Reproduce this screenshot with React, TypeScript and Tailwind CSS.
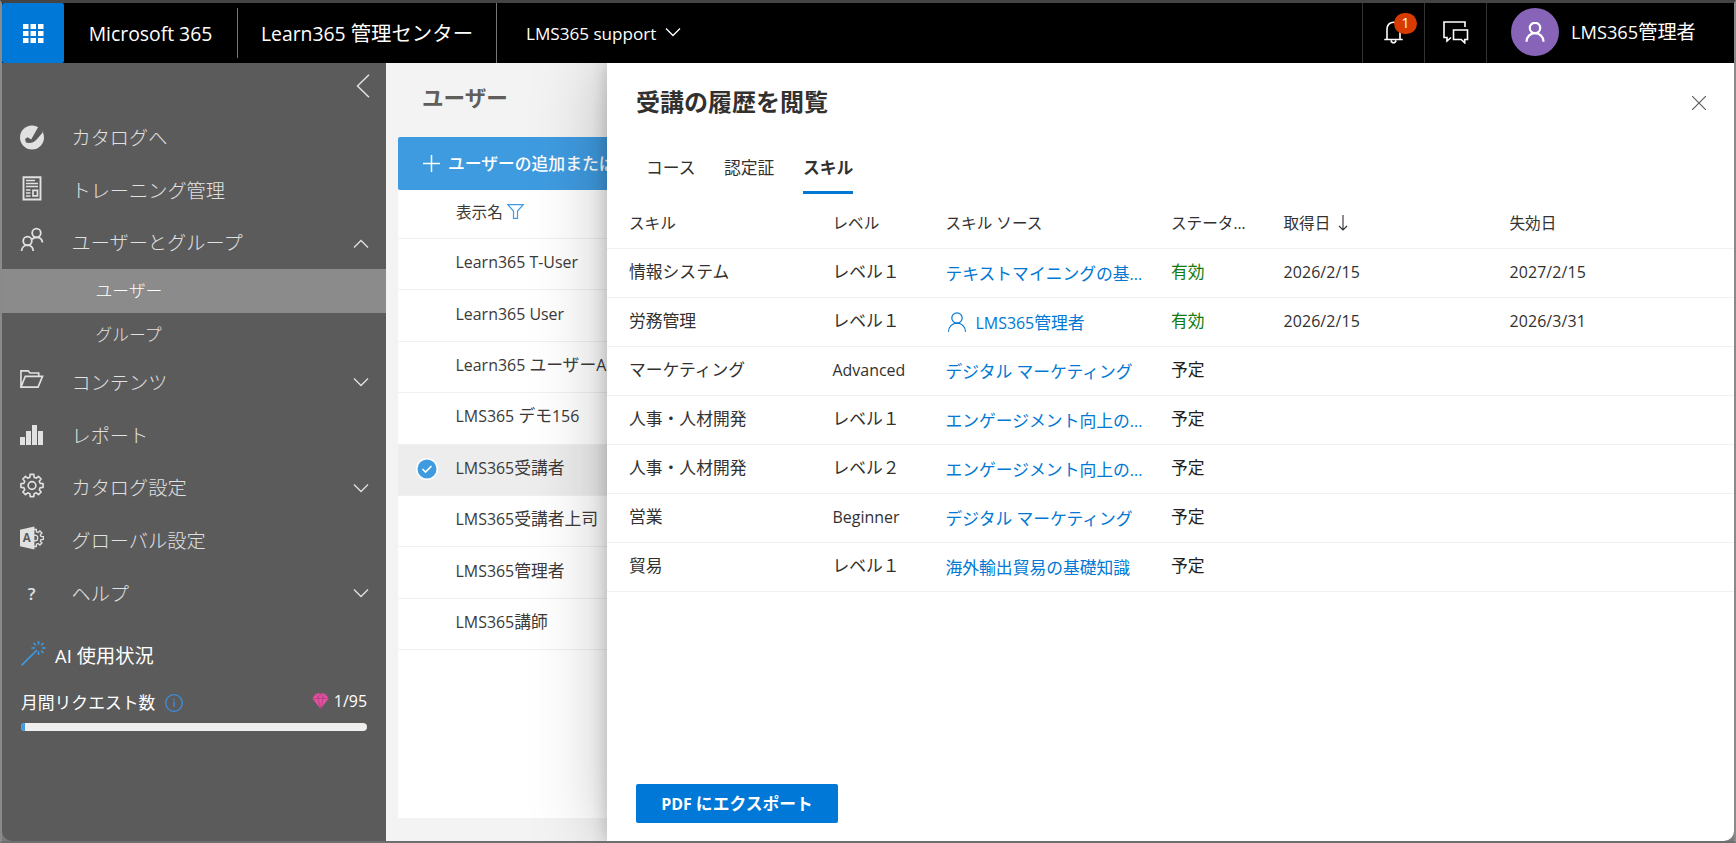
import type { ReactNode } from "react";
import clsx from "clsx";

interface NavItem {
  label: string;
  icon: ReactNode;
  chevron?: "up" | "down";
  children?: { label: string; active?: boolean }[];
}

interface Skill {
  name: string;
  level: string;
  source: string;
  person?: boolean;
  active?: boolean;
  acquired?: string;
  expires?: string;
}

const users = [
  "Learn365 T-User",
  "Learn365 User",
  "Learn365 ユーザーA",
  "LMS365 デモ156",
  "LMS365受講者",
  "LMS365受講者上司",
  "LMS365管理者",
  "LMS365講師",
];
const selectedUser = "LMS365受講者";

const skills: Skill[] = [
  { name: "情報システム", level: "レベル１", source: "テキストマイニングの基...", active: true, acquired: "2026/2/15", expires: "2027/2/15" },
  { name: "労務管理", level: "レベル１", source: "LMS365管理者", person: true, active: true, acquired: "2026/2/15", expires: "2026/3/31" },
  { name: "マーケティング", level: "Advanced", source: "デジタル マーケティング" },
  { name: "人事・人材開発", level: "レベル１", source: "エンゲージメント向上の..." },
  { name: "人事・人材開発", level: "レベル２", source: "エンゲージメント向上の..." },
  { name: "営業", level: "Beginner", source: "デジタル マーケティング" },
  { name: "貿易", level: "レベル１", source: "海外輸出貿易の基礎知識" },
];

// Latin runs are set slightly smaller than the Japanese text around them
function Txt({ children }: { children: string }) {
  return (
    <>
      {children.split(/([\x20-\x7e]+)/).map((part, i) =>
        i % 2 ? (
          <span key={i} className="text-[0.95em] whitespace-pre">
            {part}
          </span>
        ) : (
          part
        )
      )}
    </>
  );
}

function Chevron({ dir, className }: { dir: "up" | "down"; className?: string }) {
  return (
    <svg width="16" height="10" viewBox="0 0 16 10" fill="none" stroke="currentColor" strokeWidth="1.3" className={className}>
      <path d={dir === "up" ? "M1 8.5 8 1.5l7 7" : "M1 1.5l7 7 7-7"} />
    </svg>
  );
}

function Person({ size, stroke }: { size: number; stroke: number }) {
  return (
    <svg width={size} height={size} viewBox="0 0 20 20" fill="none" stroke="currentColor" strokeWidth={stroke}>
      <circle cx="10" cy="6" r="5.2" />
      <path d="M1.5 19.7c0-4.8 3.7-8.5 8.5-8.5s8.5 3.7 8.5 8.5" />
    </svg>
  );
}

function gearPath(cx: number, cy: number, outer: number, inner: number) {
  const pts: string[] = [];
  for (let i = 0; i < 8; i++) {
    const a = (i * Math.PI) / 4;
    [
      [inner, -0.25],
      [outer, -0.17],
      [outer, 0.17],
      [inner, 0.25],
    ].forEach(([r, d]) => {
      pts.push(`${(cx + r * Math.sin(a + d)).toFixed(2)} ${(cy - r * Math.cos(a + d)).toFixed(2)}`);
    });
  }
  return `M${pts.join("L")}Z`;
}

const navItems: NavItem[] = [
  {
    label: "カタログへ",
    icon: (
      <svg width="24" height="25" viewBox="0 0 24 25">
        <circle cx="12" cy="12.5" r="12" fill="currentColor" />
        <path d="M19.3 0 11.2 14.6 7.6 12.2 5 14l1 3.600c2.600.8 5.300.5 7.600-.7 2.600-1.600 5.400-5.200 9.200-9.700z" fill="#5b5b5b" />
      </svg>
    ),
  },
  {
    label: "トレーニング管理",
    icon: (
      <svg width="20" height="25" viewBox="0 0 20 25" fill="none" stroke="currentColor" className="-mt-1">
        <path d="M1.5 1.2h17v22.3h-17z" strokeWidth="1.9" />
        <path d="M4 4.5h9M4 7.5h12M4 10.5h12M4 14h4.5M4 17h4.5M4 20h4.5" strokeWidth="1.7" />
        <path d="M11 14.3h4.5v5.5H11z" strokeWidth="1.7" />
      </svg>
    ),
  },
  {
    label: "ユーザーとグループ",
    chevron: "up",
    icon: (
      <svg width="24" height="25" viewBox="0 0 24 25" fill="none" stroke="currentColor" strokeWidth="1.8" className="-mt-1.5">
        <circle cx="16.5" cy="6" r="4.3" />
        <circle cx="7.5" cy="14" r="4.3" />
        <path d="M1.5 24c.3-3.4 2.7-5.8 6-5.8s5.4 2.4 5.8 5.8M12 12.4c1-1.300 2.700-2.100 4.500-2.100 3.200 0 5.600 2 6 5.200" />
      </svg>
    ),
    children: [{ label: "ユーザー", active: true }, { label: "グループ" }],
  },
  {
    label: "コンテンツ",
    chevron: "down",
    icon: (
      <svg width="25" height="20" viewBox="0 0 25 20" fill="none" stroke="currentColor" strokeWidth="1.7" className="-mt-1.5">
        <path d="M1 18.5V1.500h7.500l2 2.200h9v3.500M1 18.500 5.500 7.200h18L18.800 18.500z" />
      </svg>
    ),
  },
  {
    label: "レポート",
    icon: (
      <svg width="24" height="20" viewBox="0 0 24 20" fill="currentColor">
        <path d="M0 12h5v8H0zM6 6h5v14H6zM12 0h5v20h-5zM18 6h5v14h-5z" />
      </svg>
    ),
  },
  {
    label: "カタログ設定",
    chevron: "down",
    icon: (
      <svg width="25" height="25" viewBox="0 0 25 25" fill="none" stroke="currentColor" strokeWidth="1.7" strokeLinejoin="round" className="-mt-1">
        <path d={gearPath(12.5, 12.5, 11.7, 8.8)} />
        <circle cx="12.5" cy="12.5" r="4" />
      </svg>
    ),
  },
  {
    label: "グローバル設定",
    icon: (
      <svg width="25" height="24" viewBox="0 0 25 24" className="-mt-1">
        <path d={gearPath(15.5, 12, 9, 6.6)} fill="none" stroke="currentColor" strokeWidth="1.4" />
        <circle cx="15.5" cy="12" r="3" fill="none" stroke="currentColor" strokeWidth="1.3" />
        <path d="M0 3.5 15 0v24L0 20.5z" fill="currentColor" />
        <text x="7" y="16.5" textAnchor="middle" fontSize="12" fontWeight="700" fill="#5b5b5b" fontFamily="Open Sans, sans-serif">
          A
        </text>
      </svg>
    ),
  },
  {
    label: "ヘルプ",
    chevron: "down",
    icon: <span className="pr-px text-[17px] font-semibold leading-none">?</span>,
  },
];

function Header() {
  return (
    <header className="flex h-[60px] shrink-0 items-center bg-black text-white">
      <button className="flex h-full w-[62px] items-center justify-center rounded-[2px] bg-[#0078d7]">
        <svg width="21" height="20" viewBox="0 0 21 20" fill="currentColor" className="mt-0.5">
          {[0, 7.5, 15].map((x) => [0, 7, 14].map((y) => <rect key={`${x}-${y}`} x={x} y={y} width="5.5" height="5" />))}
        </svg>
      </button>
      <div className="flex h-[50px] w-[174px] items-center justify-center border-r border-[#767676] pt-0.5 text-[20.4px]">
        <Txt>Microsoft 365</Txt>
      </div>
      <div className="flex h-full w-[259px] items-center justify-center border-r border-[#767676] text-[20.4px]">
        <span className="whitespace-nowrap">
          <Txt>Learn365 管理センター</Txt>
        </span>
      </div>
      <button className="flex items-center gap-[9px] pl-[29px] text-[18px]">
        <span className="whitespace-nowrap">
          <Txt>LMS365 support</Txt>
        </span>
        <Chevron dir="down" className="-mt-0.5" />
      </button>
      <div className="ml-auto flex h-full">
        <button className="relative flex w-[62px] items-center justify-center border-l border-[#333]">
          <svg width="19" height="23" viewBox="0 0 19 23" fill="none" stroke="currentColor" strokeWidth="1.6" className="-mt-0.5">
            <path d="M.3 18.5h18.4M3 18.500V8C3 4 5.800 1.200 9.500 1.200S16 4 16 8v10.500M7 19.500c.3 1.300 1.300 2.200 2.500 2.200s2.200-.9 2.500-2.200" />
          </svg>
          <span className="absolute left-[31px] top-[10px] flex h-[21px] w-[23px] items-center justify-center rounded-full bg-[#d83b01] pb-0.5 text-[14px]">
            1
          </span>
        </button>
        <button className="flex w-[62px] items-center justify-center border-l border-[#333]">
          <svg width="26" height="23" viewBox="0 0 26 23" fill="none" stroke="currentColor" strokeWidth="1.600" className="-mt-0.5">
            <path d="M22 6V1H1v15.500h3V20l4-3.500" />
            <path d="M10.500 9h14v9.500h-2.800v3.300l-3.500-3.300h-7.700z" />
          </svg>
        </button>
        <div className="flex w-[248px] items-center gap-[12px] border-l border-[#333] pl-[24px] text-[19.2px]">
          <span className="-mt-0.5 flex size-[48px] shrink-0 items-center justify-center rounded-full bg-[#8764b8]">
            <Person size={20} stroke={2.2} />
          </span>
          <span className="-mt-0.5 whitespace-nowrap">
            <Txt>LMS365管理者</Txt>
          </span>
        </div>
      </div>
    </header>
  );
}

function Sidebar() {
  return (
    <nav className="flex w-[384px] shrink-0 flex-col bg-[#5b5b5b] text-[#e1e1e1]">
      <div className="flex h-[48px] justify-end pr-[16px] pt-[11px]">
        <svg width="14" height="24" viewBox="0 0 14 24" fill="none" stroke="currentColor" strokeWidth="1.5">
          <path d="M13 .7 1.5 12 13 23.3" />
        </svg>
      </div>
      {navItems.map((item) => (
        <div key={item.label}>
          <div className="flex h-[52.7px] items-center pl-[18px] pr-[17px]">
            <span className="flex w-[24px] justify-center">{item.icon}</span>
            <span className="ml-[27.5px] flex-1 pt-[2px] text-[19.2px] font-light">{item.label}</span>
            {item.chevron && <Chevron dir={item.chevron} className={item.chevron === "up" ? "mt-0.5" : undefined} />}
          </div>
          {item.children?.map((child) => (
            <div
              key={child.label}
              className={clsx(
                "flex items-center pl-[93.5px] text-[16.8px] font-light",
                child.active ? "h-[44px] bg-[#8b8b8b] text-white" : "h-[43px]"
              )}
            >
              {child.label}
            </div>
          ))}
        </div>
      ))}

      <div className="mt-[22px] flex items-center gap-[9px] pl-[19px] text-[19.2px] text-white">
        <svg width="25" height="25" viewBox="0 0 25 25" fill="none" stroke="#3f9be3" strokeWidth="1.6" className="-mt-1">
          <path d="M.6 24.4 16 9M17.5 0v3.500M17.500 10.500V14M10.500 7H14M21 7h3.500M12.500 2l2.300 2.300M22.500 2l-2.300 2.300M22.500 12l-2.300-2.300" />
        </svg>
        <span className="tracking-[0.1px]">
          <Txt>AI 使用状況</Txt>
        </span>
      </div>
      <div className="mt-[20px] flex h-6 items-center pl-[19px] pr-[19px] text-[16.8px] text-white">
        月間リクエスト数
        <svg width="18" height="18" viewBox="0 0 18 18" fill="none" stroke="#3f8fe3" strokeWidth="1.3" className="ml-[10px] mt-0.5">
          <circle cx="9" cy="9" r="8.3" />
          <path d="M9 7.5V13M9 4.7v1.5" />
        </svg>
        <svg width="17" height="16" viewBox="0 0 17 16" className="ml-auto mr-[5px] -mt-0.5">
          <path d="M4 .5h9l3.7 5L8.5 15.7.3 5.5z" fill="#e3509f" />
          <path d="M.3 5.5h16.4M4 .5l2 5 2.5 10 2.500-10 2-5M6 5.500 8.500.5l2.500 5" fill="none" stroke="#a8407b" strokeWidth=".7" />
        </svg>
        <Txt>1/95</Txt>
      </div>
      <div className="mx-[19px] mt-[9px] h-2 shrink-0 overflow-hidden rounded-full bg-[#f0efee]">
        <div className="h-full w-1 bg-[#3f9be3]" />
      </div>
    </nav>
  );
}

function UserList() {
  return (
    <main className="w-[221px] shrink-0 overflow-hidden bg-[#f3f3f3] pl-[12px] text-[#3b3a39]">
      <h1 className="flex h-[74px] items-center pb-[4px] pl-[24px] text-[21.6px] font-bold text-[#605e5c]">ユーザー</h1>
      <div className="flex h-[53px] w-[400px] items-center gap-[8px] rounded-[2px] bg-[#3f9be0] pl-[25px] text-[16.8px] font-medium text-white">
        <svg width="17" height="17" viewBox="0 0 17 17" stroke="currentColor" strokeWidth="1.5">
          <path d="M8.5 0v17M0 8.5h17" />
        </svg>
        ユーザーの追加または
      </div>
      <div className="h-[628px] w-[400px] bg-white">
        <div className="flex h-[49px] items-center gap-[4px] border-b border-[#f0f0f0] pb-0.5 pl-[58px] text-[15.6px]">
          表示名
          <svg width="17" height="15" viewBox="0 0 17 15" fill="none" stroke="#3f9be3" strokeWidth="1.2" className="-mt-1">
            <path d="M.8.7h15.4L10.500 7v7.300h-4V7z" />
          </svg>
        </div>
        {users.map((user) => (
          <div
            key={user}
            className={clsx(
              "flex h-[51.4px] items-center border-b border-[#f0f0f0] text-[16.8px] whitespace-nowrap",
              user === selectedUser && "bg-[#ededed]"
            )}
          >
            <div className="flex w-[57.5px] shrink-0 justify-center pb-0.5">
              {user === selectedUser && (
                <svg width="22" height="22" viewBox="0 0 22 22">
                  <circle cx="11" cy="11" r="11" fill="#fff" />
                  <circle cx="11" cy="11" r="9.5" fill="#3f9be0" />
                  <path d="m6.5 11 3 3 6-6" fill="none" stroke="#fff" strokeWidth="1.6" />
                </svg>
              )}
            </div>
            <span className="-mt-1">
              <Txt>{user}</Txt>
            </span>
          </div>
        ))}
      </div>
    </main>
  );
}

const skillGrid =
  "grid grid-cols-[203.5px_113px_225.5px_112.5px_226px_1fr] items-center border-b border-[#f0f0f0] pl-[22px] h-[49px] whitespace-nowrap";

function HistoryPanel() {
  return (
    <section className="relative z-10 flex flex-1 flex-col bg-white text-[#323130] shadow-[0_0_70px_rgba(0,0,0,0.25),0_0_16px_rgba(0,0,0,0.2)] [clip-path:inset(0_0_0_-100px)]">
      <div className="flex h-[78px] items-center justify-between pl-[29px] pr-[28px]">
        <h2 className="text-[24px] font-bold">受講の履歴を閲覧</h2>
        <svg width="14" height="14" viewBox="0 0 14 14" stroke="#605e5c" strokeWidth="1.2" className="mt-[2px]">
          <path d="M0 0l14 14M14 0 0 14" />
        </svg>
      </div>
      <div className="flex h-[53px] gap-[28.5px] pl-[39px] text-[16.8px]">
        <button className="h-full">コース</button>
        <button className="h-full">認定証</button>
        <button className="h-full border-b-3 border-[#0078d4] pt-[3px] font-bold">スキル</button>
      </div>
      <div className={clsx(skillGrid, "mt-[6px] text-[15.6px]")}>
        <span>スキル</span>
        <span>レベル</span>
        <span>スキル ソース</span>
        <span>ステータ...</span>
        <span className="flex items-center gap-[8px]">
          取得日
          <svg width="10" height="16" viewBox="0 0 10 16" fill="none" stroke="currentColor" strokeWidth="1.1" className="-mt-0.5">
            <path d="M5 0v15M1 11l4 4 4-4" />
          </svg>
        </span>
        <span>失効日</span>
      </div>
      {skills.map((skill, i) => (
        <div key={i} className={clsx(skillGrid, "pb-[2px] text-[16.8px]")}>
          <span>{skill.name}</span>
          <span>
            <Txt>{skill.level}</Txt>
          </span>
          <a className="mt-[3px] flex items-center gap-[9px] text-[#0078d4]">
            {skill.person && (
              <span className="pl-[1px]">
                <Person size={20} stroke={1.2} />
              </span>
            )}
            <span>
              <Txt>{skill.source}</Txt>
            </span>
          </a>
          <span className={skill.active ? "text-[#107c10]" : "text-[#201f1e]"}>{skill.active ? "有効" : "予定"}</span>
          <span className="tracking-[0.1px]">
            <Txt>{skill.acquired ?? ""}</Txt>
          </span>
          <span className="tracking-[0.1px]">
            <Txt>{skill.expires ?? ""}</Txt>
          </span>
        </div>
      ))}
      <div className="mt-auto pb-[18px] pl-[29px]">
        <button className="h-[39px] w-[202px] rounded-[2px] bg-[#0078d7] text-[16.8px] font-bold text-white">
          <Txt>PDF にエクスポート</Txt>
        </button>
      </div>
    </section>
  );
}

export default function App() {
  return (
    <div className="h-[843px] w-[1736px] overflow-hidden border-2 border-t-3 border-[#8a8a8a] border-t-[#444] border-b-[#6e6e6e] bg-[#7a7a7a] font-['Open_Sans','Noto_Sans_CJK_JP',sans-serif]">
      <div className="flex h-full flex-col overflow-hidden rounded-b-[10px]">
        <Header />
        <div className="flex min-h-0 flex-1">
          <Sidebar />
          <UserList />
          <HistoryPanel />
        </div>
      </div>
    </div>
  );
}
